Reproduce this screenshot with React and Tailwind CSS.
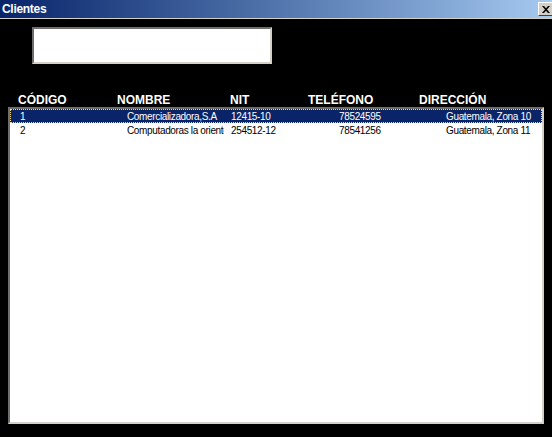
const clientes = [
  { codigo: '1', nombre: 'Comercializadora,S.A', nit: '12415-10', telefono: '78524595', direccion: 'Guatemala, Zona 10' },
  { codigo: '2', nombre: 'Computadoras la oriente', nit: '254512-12', telefono: '78541256', direccion: 'Guatemala, Zona 11' },
];

function Row({ c, selected }) {
  return (
    <div
      className={
        'flex h-[14px] leading-[14px] pt-[1px] text-[10px] tracking-[-0.35px] whitespace-nowrap ' +
        (selected ? 'bg-[#0a246a] text-white outline outline-1 outline-dotted outline-[#f5db95] -outline-offset-1' : 'text-black')
      }
    >
      <div className="w-[117px] pl-[10px]">{c.codigo}</div>
      <div className="w-[97px] overflow-hidden">{c.nombre}</div>
      <div className="w-[115px] pl-[7px]">{c.nit}</div>
      <div className="w-[107px]">{c.telefono}</div>
      <div className="flex-1">{c.direccion}</div>
    </div>
  );
}

export default function App() {
  return (
    <div className="w-[552px] h-[437px] bg-black flex flex-col overflow-hidden font-['Liberation_Sans',Arial,sans-serif]">
      {/* title bar */}
      <div className="h-[19px] flex items-start bg-gradient-to-r from-[#0a246a] to-[#a6caf0] border-b border-[#d4d0c8] overflow-hidden">
        <span className="pl-[2px] pt-[2px] text-[12px] leading-[14px] font-bold tracking-[-0.3px] text-white">Clientes</span>
        <button className="ml-auto mr-[-2px] mt-[2px] w-[16px] h-[14px] flex items-center justify-center bg-[#d4d0c8] border border-t-white border-l-white border-r-[#404040] border-b-[#404040]">
          <svg width="8" height="7" viewBox="0 0 8 7">
            <path d="M0 0h2l2 2.2L6 0h2L5 3.5 8 7H6L4 4.8 2 7H0l3-3.5z" fill="#000" />
          </svg>
        </button>
      </div>

      {/* search box */}
      <div className="ml-[32px] mt-[8px] w-[240px] h-[37px] bg-white border-2 border-t-[#6e6e6e] border-l-[#6e6e6e] border-r-[#d4d0c8] border-b-[#d4d0c8]" />

      {/* headers */}
      <div className="flex mt-[30px] h-[13px] leading-[13px] pl-[18px] text-[12px] font-bold text-white">
        <div className="w-[99px]">CÓDIGO</div>
        <div className="w-[113px]">NOMBRE</div>
        <div className="w-[78px]">NIT</div>
        <div className="w-[111px]">TELÉFONO</div>
        <div>DIRECCIÓN</div>
      </div>

      {/* list */}
      <div className="ml-[8px] w-[536px] h-[317px] bg-white border-2 border-t-[#6e6e6e] border-l-[#6e6e6e] border-r-[#d4d0c8] border-b-[#d4d0c8]">
        {clientes.map((c, i) => (
          <Row key={c.codigo} c={c} selected={i === 0} />
        ))}
      </div>
    </div>
  );
}
